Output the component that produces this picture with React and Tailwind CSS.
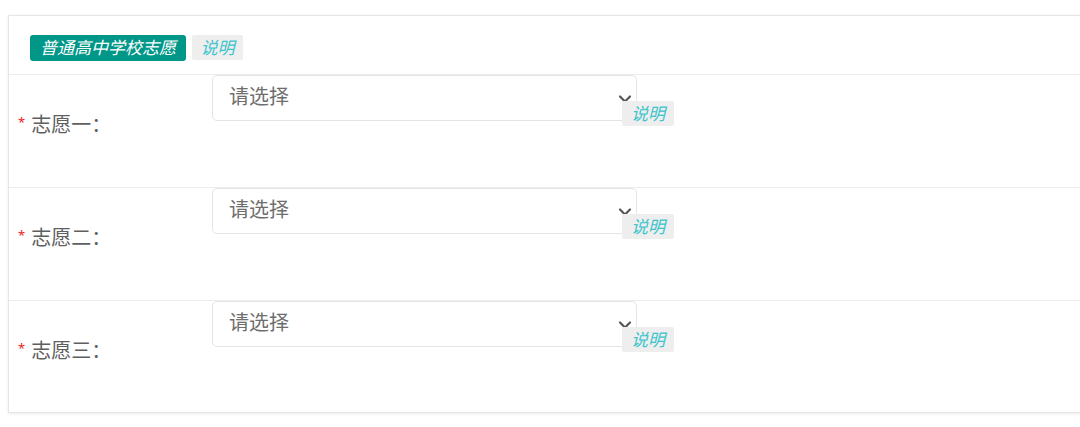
import { ChevronDown } from 'lucide-react'

const rows = ['志愿一', '志愿二', '志愿三']

const Hint = ({ className = '' }) => (
    <span className={`inline-flex items-center justify-center bg-[#eeeeee] rounded-[2px] text-[#3cc4cc] italic text-[17px] leading-none ${className}`}>
        说明
    </span>
)

const ChoiceRow = ({ label }) => (
    <div className="flex h-[113px] border-t border-[#ededed]">
        <div className="w-[203px] shrink-0 pl-[9px] pt-[35px] flex items-center h-fit text-[20px] text-[#5f5f5f]">
            <span className="text-[#ee2222] text-[13px] mr-[6px] -mt-[4px]">*</span>
            <span>{label}：</span>
        </div>
        <div className="flex items-start">
            <div className="relative w-[425px] h-[46px] border border-[#e4e4e4] rounded-[5px] bg-white flex items-center pl-[16px] pb-[2px] text-[20px] text-[#6e6e6e]">
                请选择
                <ChevronDown className="absolute right-[1px] top-[13px] w-[20px] h-[20px] text-[#555]" strokeWidth={2.6} />
            </div>
            <Hint className="w-[52px] h-[25px] mt-[26px] -ml-[15px] relative" />
        </div>
    </div>
)

const App = () => {
    return (
        <div className="w-[1080px] h-[427px] bg-white pt-[15px] pl-[8px] overflow-hidden" style={{ fontFamily: '"Noto Sans", "Noto Sans CJK SC", sans-serif' }}>
            <div className="w-[1100px] h-[398px] border border-[#e6e6e6] shadow-[0_1px_3px_rgba(0,0,0,0.08)] bg-white">
                <div className="h-[58px] flex items-center gap-[6px] pl-[21px] pt-[5px]">
                    <span className="h-[26px] px-[10px] bg-[#009688] text-white italic rounded-[3px] text-[17px] flex items-center">
                        普通高中学校志愿
                    </span>
                    <Hint className="w-[51px] h-[25px]" />
                </div>
                {rows.map((r) => (
                    <ChoiceRow key={r} label={r} />
                ))}
            </div>
        </div>
    )
}

export default App
